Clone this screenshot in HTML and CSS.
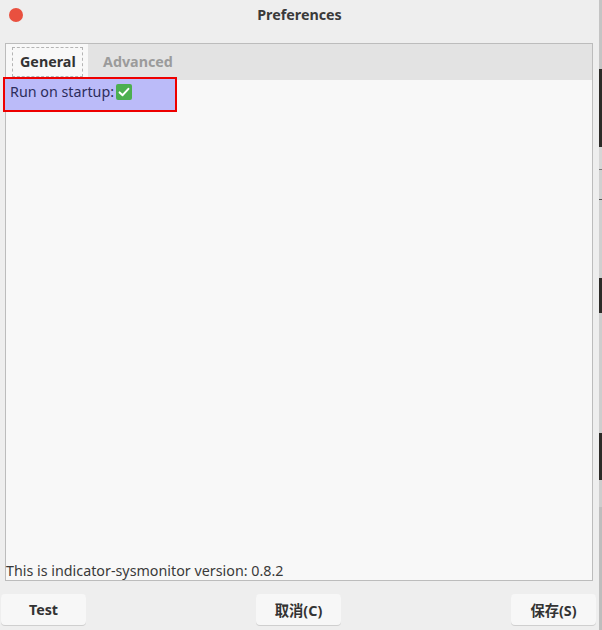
FILE: index.html
```html
<!DOCTYPE html>
<html>
<head>
<meta charset="utf-8">
<link rel="stylesheet" href="styles.css">
</head>
<body>
<div class="screen">
  <div class="window">
    <div class="titlebar">
      <span class="close"></span>
      <span class="title">Preferences</span>
    </div>
    <div class="frame">
      <div class="tabbar">
        <div class="tab active"><span class="focus">General</span></div>
        <div class="tab">Advanced</div>
      </div>
      <div class="pane">
        <div class="row">
          <span>Run on startup:</span>
          <svg class="check" width="16" height="16" viewBox="0 0 16 16">
            <rect x="0" y="0" width="16" height="16" rx="2" fill="#4caf50"/>
            <path d="M3.6 8.4 L6.6 11.2 L12.4 4.8" fill="none" stroke="#ffffff" stroke-width="2" stroke-linecap="round" stroke-linejoin="round"/>
          </svg>
        </div>
        <div class="version">This is indicator-sysmonitor version: 0.8.2</div>
      </div>
    </div>
    <div class="buttons">
      <button class="btn">Test</button>
      <button class="btn">取消(C)</button>
      <button class="btn">保存(S)</button>
    </div>
  </div>
  <div class="outside">
    <div class="seg s1"></div>
    <div class="seg s2"></div>
    <div class="seg s3"></div>
    <div class="seg s4"></div>
    <div class="seg s5"></div>
    <div class="seg s6"></div>
    <div class="seg s7"></div>
    <div class="seg s8"></div>
    <div class="seg s9"></div>
  </div>
</div>
</body>
</html>
```

FILE: styles.css
```css
* { box-sizing: border-box; }
html, body { margin: 0; padding: 0; }
body {
  font-family: "Noto Sans", "Noto Sans CJK SC", sans-serif;
  font-size: 14.3px;
  color: #3c3c3c;
  background: #eeeeee;
}
.screen {
  display: flex;
  width: 602px;
  height: 630px;
  overflow: hidden;
}
.window {
  width: 599px;
  height: 630px;
  background: #eeeeee;
  display: flex;
  flex-direction: column;
}
.titlebar {
  height: 37px;
  display: flex;
  align-items: center;
  justify-content: center;
  position: relative;
  padding-bottom: 9px;
}
.close {
  position: absolute;
  left: 9px;
  top: 8px;
  width: 14px;
  height: 14px;
  border-radius: 50%;
  background: #e9503f;
}
.title {
  font-weight: bold;
  font-size: 14.3px;
  color: #3a3a3a;
}
.frame {
  margin: 6px 0 0 5px;
  width: 588px;
  height: 538px;
  border: 1px solid #bcbcbc;
  display: flex;
  flex-direction: column;
  background: #f8f8f8;
}
.tabbar {
  height: 36px;
  background: #e3e3e3;
  display: flex;
  align-items: stretch;
}
.tab {
  display: flex;
  align-items: center;
  font-weight: bold;
  color: #9b9b9b;
  padding: 0 15px 2px;
}
.tab.active {
  background: #f8f8f8;
  color: #333333;
  width: 82px;
  padding: 3px 5px 3px 6px;
}
.focus {
  flex: 1;
  height: 100%;
  border: 1px dashed #b4b4b4;
  display: flex;
  align-items: center;
  padding-left: 7px;
  padding-bottom: 2px;
}
.pane {
  flex: 1;
  display: flex;
  flex-direction: column;
  justify-content: space-between;
}
.row {
  margin-top: -1px;
  margin-left: -1px;
  width: 170px;
  height: 31px;
  background: #bbbbf9;
  outline: 2px solid #ee0000;
  display: flex;
  align-items: flex-start;
  gap: 2px;
  padding: 3px 0 0 5px;
  color: #2d2d5c;
}
.check { display: block; margin-top: 2px; }
.version {
  color: #3a3a3a;
  line-height: 18px;
  padding-bottom: 0;
}
.buttons {
  display: flex;
  justify-content: space-between;
  padding: 13px 3px 0 1px;
}
.btn {
  width: 85px;
  height: 31px;
  border: none;
  border-radius: 4px;
  background: #f7f7f7;
  box-shadow: 0 1px 0 #cfcfcf;
  font-family: "Noto Sans", "Noto Sans CJK SC", sans-serif;
  font-weight: bold;
  font-size: 14.3px;
  color: #333333;
  padding: 0;
}
.outside {
  width: 3px;
  display: flex;
  flex-direction: column;
  background: #bdbdbd;
}
.seg { width: 3px; }
.s1 { height: 69px; background: #c4c4c4; }
.s2 { height: 78px; background: #2d2b28; }
.s3 { height: 23px; background: #d6d6d6; border-bottom: 1px solid #777; }
.s4 { height: 30px; background: #d0d0d0; border-bottom: 1px solid #555; }
.s5 { height: 78px; background: #cfcfcf; }
.s6 { height: 35px; background: #2d2b28; }
.s7 { height: 120px; background: #cdcdcd; }
.s8 { height: 47px; background: #2d2b28; }
.s9 { height: 27px; background: #cdcdcd; }
```
